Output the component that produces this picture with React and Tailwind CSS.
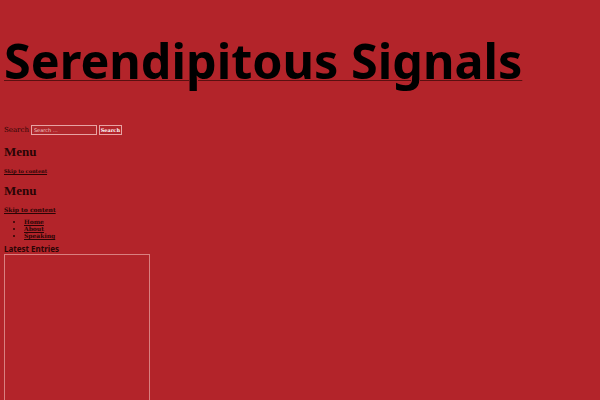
const App = () => {
  return (
    <div className="w-[600px] h-[400px] overflow-hidden bg-[#b3242a] text-[#2a0505] font-['DejaVu_Serif',serif]">
      <div className="pt-[33px] pl-[4px]">
        <h1 className="font-['Noto_Sans',sans-serif] font-bold text-[48.5px] leading-[54px] text-black">
          <a href="#" className="underline decoration-[#5a1010] decoration-1 underline-offset-[1px]">
            Serendipitous Signals
          </a>
        </h1>
      </div>
      <div className="px-[4px]">
        <form className="mt-[38px] flex items-center gap-[2px] h-[10px] text-[7px]">
          <label>Search</label>
          <input
            placeholder="Search …"
            className="w-[66px] h-[10px] border border-[#e7a3a3] bg-[#b0272c] text-[5px] px-[2px] text-white placeholder:text-[#f3caca] font-['DejaVu_Sans',sans-serif] outline-none"
          />
          <button className="w-[23px] h-[10px] border border-[#e7a3a3] text-white font-bold text-[5px] leading-none">
            Search
          </button>
        </form>
        <h2 className="mt-[10px] font-['Liberation_Serif',serif] text-[13px] leading-[14px] font-bold">Menu</h2>
        <a href="#" className="block mt-[9px] text-[5px] leading-[6px] font-bold underline">
          Skip to content
        </a>
        <h2 className="mt-[10px] font-['Liberation_Serif',serif] text-[13px] leading-[14px] font-bold">Menu</h2>
        <a href="#" className="block mt-[8px] text-[6px] leading-[7px] font-bold underline">
          Skip to content
        </a>
        <ul className="mt-[5px] pl-[20px] list-disc text-[6px] leading-[7px] font-bold">
          <li><a href="#" className="underline">Home</a></li>
          <li><a href="#" className="underline">About</a></li>
          <li><a href="#" className="underline">Speaking</a></li>
        </ul>
        <h3 className="mt-[5px] font-['Noto_Sans',sans-serif] font-bold text-[8px] leading-[10px]">
          Latest Entries
        </h3>
        <div className="w-[146px] h-[200px] border border-[#d98080]"></div>
      </div>
    </div>
  );
};

export default App;
